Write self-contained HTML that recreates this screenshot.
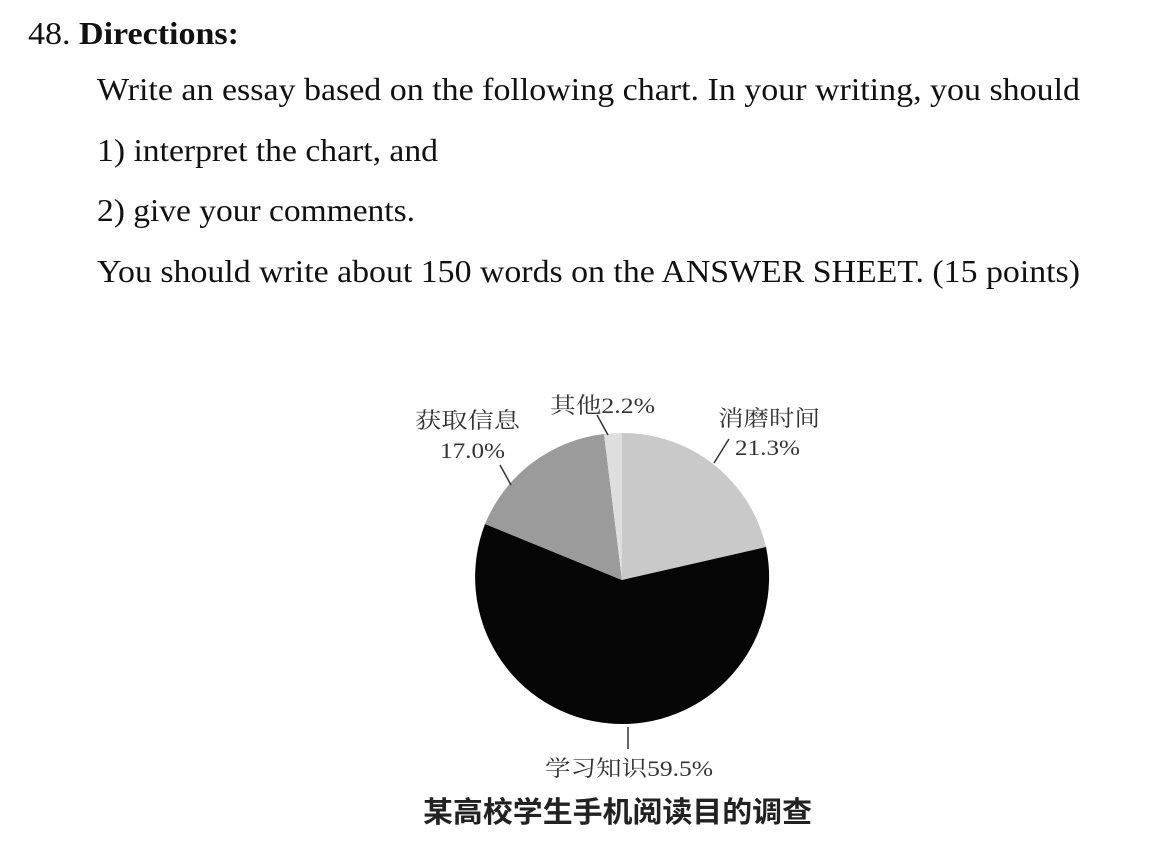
<!DOCTYPE html>
<html><head><meta charset="utf-8"><style>
html,body{margin:0;padding:0;background:#fff;}
svg{display:block}
</style></head><body>
<svg width="1168" height="842" viewBox="0 0 1168 842" xmlns="http://www.w3.org/2000/svg">
<g font-family="Liberation Serif, serif" font-size="32" fill="#111">
<text x="28" y="44" textLength="211" lengthAdjust="spacingAndGlyphs">48. <tspan font-weight="bold">Directions:</tspan></text>
<text x="97" y="100" textLength="983" lengthAdjust="spacingAndGlyphs">Write an essay based on the  following chart. In your writing, you should</text>
<text x="97" y="161" textLength="341" lengthAdjust="spacingAndGlyphs">1) interpret the chart, and</text>
<text x="97" y="221" textLength="318" lengthAdjust="spacingAndGlyphs">2) give your comments.</text>
<text x="97" y="282" textLength="983" lengthAdjust="spacingAndGlyphs">You should write about 150 words on the ANSWER SHEET. (15 points)</text>
</g>
<g>
<path d="M622,580 L622,433 A147,147 0 0 1 766,547 Z" fill="#c9c9c9"/>
<path d="M622,580 L766,547 A147,147 0 1 1 485,524 Z" fill="#050505"/>
<path d="M622,580 L485,524 A147,147 0 0 1 604,434 Z" fill="#9b9b9b"/>
<path d="M622,580 L604,434 A147,147 0 0 1 622,433 Z" fill="#dedede"/>
</g>
<g stroke="#333" stroke-width="1.5" fill="none">
<line x1="714" y1="463" x2="729" y2="439"/>
<line x1="500" y1="465" x2="511" y2="485"/>
<line x1="597" y1="415" x2="608" y2="435"/>
<line x1="628" y1="727" x2="628" y2="749"/>
</g>
<g font-family="Liberation Serif, Noto Serif CJK SC, serif" font-size="22" fill="#333">
<text x="415" y="428" textLength="105" lengthAdjust="spacingAndGlyphs">获取信息</text>
<text x="440" y="458" textLength="65" lengthAdjust="spacingAndGlyphs">17.0%</text>
<text x="550" y="413" textLength="105" lengthAdjust="spacingAndGlyphs">其他2.2%</text>
<text x="718" y="426" textLength="102" lengthAdjust="spacingAndGlyphs">消磨时间</text>
<text x="735" y="455" textLength="65" lengthAdjust="spacingAndGlyphs">21.3%</text>
<text x="545" y="776" textLength="168" lengthAdjust="spacingAndGlyphs">学习知识59.5%</text>
</g>
<text x="423" y="822" font-family="Liberation Sans, Noto Sans CJK SC, sans-serif" font-weight="bold" font-size="29" fill="#222" textLength="389" lengthAdjust="spacingAndGlyphs">某高校学生手机阅读目的调查</text>
</svg>
</body></html>
